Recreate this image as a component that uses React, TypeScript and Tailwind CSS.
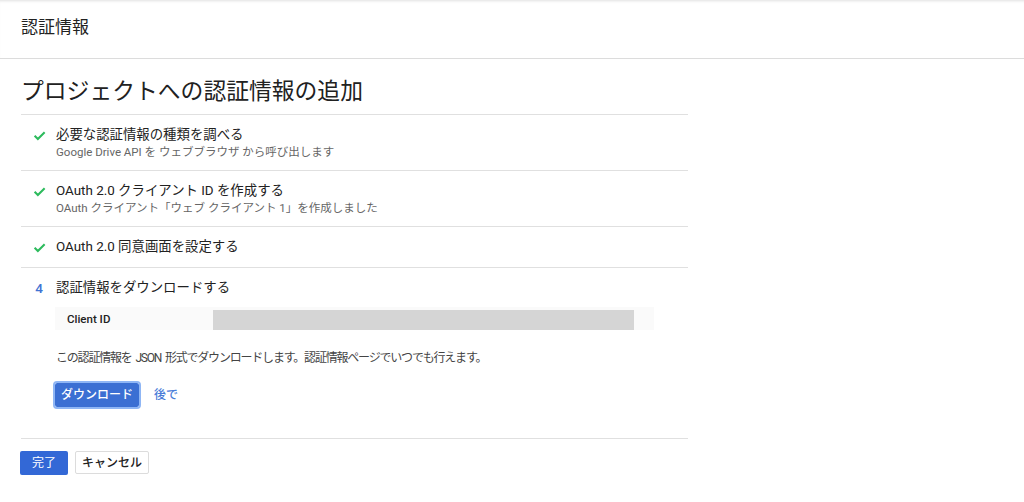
import React from 'react';

const font = { fontFamily: 'Roboto, "Noto Sans CJK JP", sans-serif' };

const Check: React.FC = () => (
  <svg width="13" height="13" viewBox="0 0 24 24" className="shrink-0">
    <path d="M3 12.5l6 6L21.5 6" fill="none" stroke="#2dbb5d" strokeWidth="3.8" />
  </svg>
);

type Step = { title: string; sub?: string };

const done: Step[] = [
  { title: '必要な認証情報の種類を調べる', sub: 'Google Drive API を ウェブブラウザ から呼び出します' },
  { title: 'OAuth 2.0 クライアント ID を作成する', sub: 'OAuth クライアント「ウェブ クライアント 1」を作成しました' },
  { title: 'OAuth 2.0 同意画面を設定する' },
];

const App: React.FC = () => {
  return (
    <div className="min-h-screen w-[1024px] h-[502px] bg-white text-[#212121] overflow-hidden" style={font}>
      {/* Header */}
      <div className="h-[59px] border-b border-[#dcdcdc] flex items-center px-[21px] shadow-[inset_0_3px_3px_-2px_rgba(0,0,0,0.12)]">
        <span className="text-[17px] leading-[22px] text-[#222] -mt-[4px]">認証情報</span>
      </div>

      <div className="px-[21px] w-[709px]">
        <h1 className="pt-[17px] pb-[6px] text-[22.8px] leading-[32px] text-[#212121]">プロジェクトへの認証情報の追加</h1>

        {/* Steps */}
        <div className="border-t border-[#e0e0e0]">
          {done.map((s) => (
            <div key={s.title} className={`flex pl-[12px] border-b border-[#e0e0e0] pt-[10px] ${s.sub ? 'pb-[11px]' : 'pb-[10px]'}`}>
              <div className="w-[12px] h-[20px] flex items-center mr-[11px]">
                <Check />
              </div>
              <div>
                <div className="text-[13.4px] leading-[20px] text-[#212121]">{s.title}</div>
                {s.sub && <div className="text-[11.5px] leading-[14px] text-[#666]">{s.sub}</div>}
              </div>
            </div>
          ))}

          {/* Step 4 */}
          <div className="flex pl-[12px] pt-[10px] pb-[31px] border-b border-[#e0e0e0]">
            <div className="w-[12px] mr-[11px] text-[13.5px] leading-[20px] text-[#3f73d3] font-medium flex justify-center">4</div>
            <div className="flex-1">
              <div className="text-[13.4px] leading-[20px] text-[#212121]">認証情報をダウンロードする</div>
              <div className="mt-[9px] w-[599px] -ml-[1px] h-[23px] bg-[#fafafa] flex items-end">
                <div className="w-[158px] pl-[12px] text-[11.5px] leading-[23px] text-[#222] font-medium self-center mt-[2px]">Client ID</div>
                <div className="w-[421px] h-[20px] bg-[#d5d5d5]" />
              </div>
              <p className="mt-[20px] text-[12px] leading-[16px] tracking-[-1.2px] [word-spacing:2px] text-[#444]">
                この認証情報を JSON 形式でダウンロードします。認証情報ページでいつでも行えます。
              </p>
              <div className="mt-[17px] flex items-center gap-[15px] -ml-[1px]">
                <button className="h-[24px] px-[6px] bg-[#3b6fd3] text-white text-[12px] font-medium rounded-[2px] outline outline-[2px] outline-[#8fb6f5] outline-offset-0">
                  ダウンロード
                </button>
                <span className="text-[12px] text-[#4a7dd8] font-medium">後で</span>
              </div>
            </div>
          </div>
        </div>

        {/* Footer buttons */}
        <div className="pt-[12px] flex gap-[7px] -ml-[1px]">
          <button className="h-[24px] w-[48px] bg-[#3368d6] text-white text-[12px] rounded-[2px]">完了</button>
          <button className="h-[23px] px-[6px] bg-white border border-[#dcdcdc] text-[#212121] text-[12px] font-medium rounded-[2px]">キャンセル</button>
        </div>
      </div>
    </div>
  );
};

export default App;
